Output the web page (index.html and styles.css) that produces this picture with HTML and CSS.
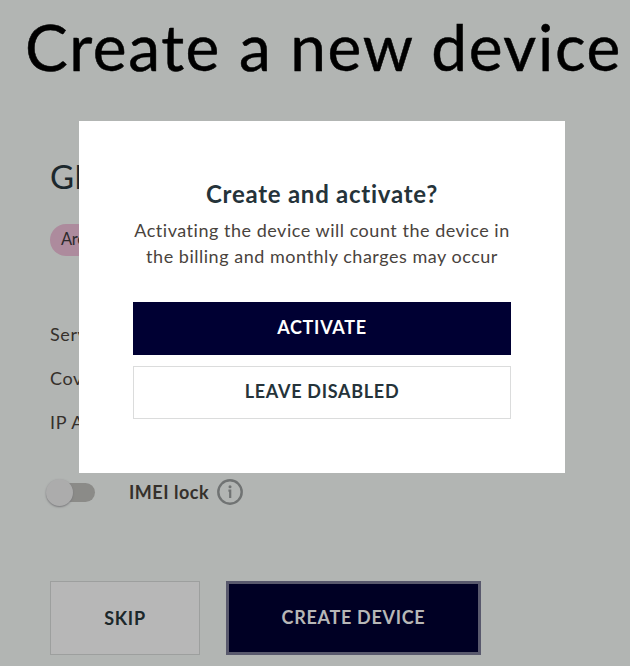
FILE: index.html
```html
<!DOCTYPE html>
<html lang="en">
<head>
<meta charset="utf-8">
<title>Create a new device</title>
<link rel="stylesheet" href="styles.css">
</head>
<body>
<main class="page">
  <h1 class="title">Create a new device</h1>
  <section class="summary">
    <h2 class="name">GPS</h2>
    <span class="tag">Area</span>
    <ul class="details">
      <li>Service</li>
      <li>Coverage</li>
      <li>IP Address</li>
    </ul>
    <div class="lock">
      <span class="switch"><span class="knob"></span></span>
      <span class="lock-label">IMEI lock</span>
      <svg class="info" viewBox="0 0 26 26" aria-hidden="true">
        <circle cx="13" cy="13" r="11.7" fill="none" stroke="currentColor" stroke-width="2.4"/>
        <circle cx="13" cy="7.7" r="1.5" fill="currentColor"/>
        <path d="M11.4 11.6H13.2V19" fill="none" stroke="currentColor" stroke-width="2.2"/>
      </svg>
    </div>
  </section>
  <footer class="actions">
    <button class="button skip">SKIP</button>
    <button class="button create">CREATE DEVICE</button>
  </footer>
</main>
<div class="overlay">
  <section class="dialog" role="dialog" aria-modal="true">
    <h3 class="question">Create and activate?</h3>
    <p class="message">Activating the device will count the device in<br>the billing and monthly charges may occur</p>
    <button class="button activate">ACTIVATE</button>
    <button class="button leave">LEAVE DISABLED</button>
  </section>
</div>
</body>
</html>
```
FILE: styles.css
```css
* { box-sizing: border-box; }
html, body { height: 100%; overflow: hidden; }
body { margin: 0; background: #b2b5b3; font-family: Lato, "Liberation Sans", sans-serif; color: #35302b; }
h1, h2, h3, p, ul { margin: 0; padding: 0; font-weight: 400; }
.page { height: 666px; }
.title { height: 121px; padding: 8px 0 0 25px; font-size: 64px; line-height: 77px; letter-spacing: 1.6px; white-space: nowrap; color: #000; -webkit-text-stroke: .5px #000; }
.summary { padding: 34px 50px 0; height: 460px; }
.name { height: 69px; font-size: 33px; line-height: 42px; color: #1c282d; }
.tag { display: block; width: 90px; height: 32px; padding-left: 11px; border-radius: 16px; background: #ad8b9d; font-size: 16.5px; letter-spacing: -.3px; line-height: 31px; color: #2d2a2c; }
.details { margin-top: 56px; list-style: none; font-size: 18px; letter-spacing: .6px; line-height: 44px; }
.lock { display: flex; align-items: center; height: 46px; margin-top: 25px; }
.switch { display: flex; align-items: center; width: 45px; height: 19px; border-radius: 10px; background: #8b8b88; }
.knob { flex: none; width: 27px; height: 27px; margin-left: -4px; border-radius: 50%; background: #acacac; box-shadow: 0 1px 2px #77777a; }
.lock-label { width: 88px; margin-left: 34px; font-size: 18px; font-weight: 700; letter-spacing: .5px; white-space: nowrap; }
.info { width: 26px; height: 26px; color: #707373; }
.actions { display: flex; gap: 26px; padding-left: 50px; }
.button { display: flex; align-items: center; justify-content: center; padding: 0; border: 0; border-radius: 0; font: 700 18px/24px Lato, "Liberation Sans", sans-serif; letter-spacing: .7px; }
.skip { width: 150px; height: 74px; border: 1px solid #9d9f9e; background: #b7b7b7; color: #1c282b; }
.create { width: 255px; height: 74px; padding-bottom: 2px; border: 3px solid #59596d; background: #000024; color: #b7b7b7; }
.overlay { position: fixed; inset: 0; padding: 121px 0 0 79px; }
.dialog { width: 486px; height: 352px; padding: 57px 54px 0; background: #fff; text-align: center; }
.question { font-size: 24px; line-height: 32px; font-weight: 700; letter-spacing: .74px; color: #25333a; }
.message { height: 92px; padding-top: 7px; font-size: 18px; line-height: 26px; letter-spacing: .52px; white-space: nowrap; color: #49433d; }
.activate { width: 378px; height: 53px; padding-bottom: 3px; background: #000033; color: #fff; }
.leave { width: 378px; height: 53px; margin-top: 11px; padding-bottom: 3px; border: 1px solid #dbdcdc; background: #fff; color: #25333a; }
```
